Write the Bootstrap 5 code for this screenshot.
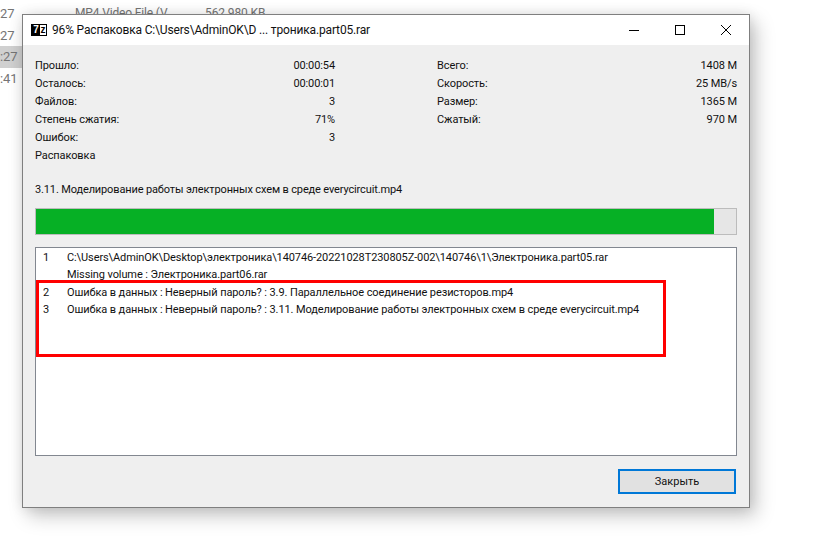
<!DOCTYPE html>
<html lang="ru">
<head>
<meta charset="utf-8">
<title>7-Zip</title>
<link href="https://cdn.jsdelivr.net/npm/bootstrap@5.3.0/dist/css/bootstrap.min.css" rel="stylesheet">
<style>
html,body{margin:0;height:549px;overflow:hidden;background:#fff}
body{font-family:Roboto,"Liberation Sans",sans-serif;font-size:11px;color:#111;line-height:18px;letter-spacing:-.1px}
.desk{position:relative;width:825px;height:549px;overflow:hidden}
.behind{position:absolute;color:#757575;font-size:13px;line-height:21.5px}
.times{left:0;top:3px;width:22px}
.times .tline{display:block;height:21.5px;text-align:right;padding-right:7px}
.times .tshift{padding-right:13px}
.times .sel{background:#d0d0d0}
.file-a{left:75px;top:3px;font-size:12px;letter-spacing:-.15px}
.file-b{left:205px;top:3px;font-size:12px}
.win{position:absolute;left:22px;top:14px;width:728px;height:494px;background:#efefef;border:1px solid #7f7f7f;box-shadow:6px 8px 18px rgba(0,0,0,.22),0 0 12px rgba(0,0,0,.10);display:flex;flex-direction:column}
.tbar{height:30px;background:#fff;display:flex;align-items:center;padding-left:8px;flex:none}
.tbar .ttl{font-size:12px;margin-left:5px;color:#111;flex:1;letter-spacing:-.16px}
.logo{width:16px;height:12px;border:1px solid #000;outline:0;background:#000;display:flex;flex:none;font:bold 10px/10px "Liberation Sans",sans-serif;letter-spacing:0;overflow:hidden}
.logo .sev{width:8px;background:#000;color:#fff;text-align:center}
.logo .zed{width:6px;background:#fff;color:#000;text-align:center}
.wbtn{width:46px;height:30px;display:flex;align-items:center;justify-content:center;flex:none}
.wbody{padding:12px 12px 0 12px;flex:1;display:flex;flex-direction:column}
.stats{display:flex;gap:102px}
.stat-col{width:300px}
.kv{display:flex;justify-content:space-between;height:18px}
.fname{margin-top:16px;height:18px;white-space:nowrap;letter-spacing:-.14px}
.bar-wrap{height:27px;margin-top:9px;border:1px solid #bcbcbc;border-radius:0;background:#e6e6e6;--bs-progress-height:27px;flex:none}
.bar-wrap .progress-bar{background:#06b025}
.logbox{margin-top:12px;height:209px;flex:none;border:1px solid #828790;background:#fff;padding:1px 7px 0;position:relative}
.lrow{display:flex;height:17.4px;line-height:17.4px;white-space:nowrap}
.lrow .num{width:24px;flex:none}
.foot{display:flex;justify-content:flex-end;padding-top:13px;padding-right:1px}
.closebtn{width:118px;height:25px;border:2px solid #0078d7;border-radius:0;background:#e1e1e1;font-size:11px;line-height:18px;padding:0;color:#111;letter-spacing:0}
.mark-red{position:absolute;left:36px;top:280px;width:630px;height:77px;border:3px solid #f00;pointer-events:none}
</style>
</head>
<body>
<div class="desk">
  <div class="behind times"><span class="tline tshift">27</span><span class="tline tshift">27</span><span class="tline sel">:27</span><span class="tline">:41</span></div>
  <div class="behind file-a">MP4 Video File (V</div>
  <div class="behind file-b">562 980 KB</div>
  <div class="win">
    <div class="tbar">
      <span class="logo"><span class="sev">7</span><span class="zed">z</span></span>
      <span class="ttl">96% Распаковка C:\Users\AdminOK\D ... троника.part05.rar</span>
      <span class="wbtn"><svg width="10" height="10" viewBox="0 0 10 10"><path d="M0 5.5h10" stroke="#000"/></svg></span>
      <span class="wbtn"><svg width="10" height="10" viewBox="0 0 10 10"><rect x=".5" y=".5" width="9" height="9" fill="none" stroke="#000"/></svg></span>
      <span class="wbtn"><svg width="10" height="10" viewBox="0 0 10 10"><path d="M0 0l10 10M10 0L0 10" stroke="#000" fill="none"/></svg></span>
    </div>
    <div class="wbody">
      <div class="stats">
        <div class="stat-col">
          <div class="kv"><span>Прошло:</span><span>00:00:54</span></div>
          <div class="kv"><span>Осталось:</span><span>00:00:01</span></div>
          <div class="kv"><span>Файлов:</span><span>3</span></div>
          <div class="kv"><span>Степень сжатия:</span><span>71%</span></div>
          <div class="kv"><span>Ошибок:</span><span>3</span></div>
          <div class="kv"><span>Распаковка</span></div>
        </div>
        <div class="stat-col">
          <div class="kv"><span>Всего:</span><span>1408 M</span></div>
          <div class="kv"><span>Скорость:</span><span>25 MB/s</span></div>
          <div class="kv"><span>Размер:</span><span>1365 M</span></div>
          <div class="kv"><span>Сжатый:</span><span>970 M</span></div>
        </div>
      </div>
      <div class="fname">3.11. Моделирование работы электронных схем в среде everycircuit.mp4</div>
      <div class="progress bar-wrap"><div class="progress-bar" role="progressbar" style="width:96.85%"></div></div>
      <div class="logbox">
        <div class="lrow"><span class="num">1</span><span>C:\Users\AdminOK\Desktop\электроника\140746-20221028T230805Z-002\140746\1\Электроника.part05.rar</span></div>
        <div class="lrow"><span class="num"></span><span>Missing volume : Электроника.part06.rar</span></div>
        <div class="lrow"><span class="num">2</span><span>Ошибка в данных : Неверный пароль? : 3.9. Параллельное соединение резисторов.mp4</span></div>
        <div class="lrow"><span class="num">3</span><span>Ошибка в данных : Неверный пароль? : 3.11. Моделирование работы электронных схем в среде everycircuit.mp4</span></div>
      </div>
      <div class="foot"><button type="button" class="btn closebtn">Закрыть</button></div>
    </div>
  </div>
  <div class="mark-red"></div>
</div>
<script src="https://cdn.jsdelivr.net/npm/bootstrap@5.3.0/dist/js/bootstrap.bundle.min.js"></script>
</body>
</html>
